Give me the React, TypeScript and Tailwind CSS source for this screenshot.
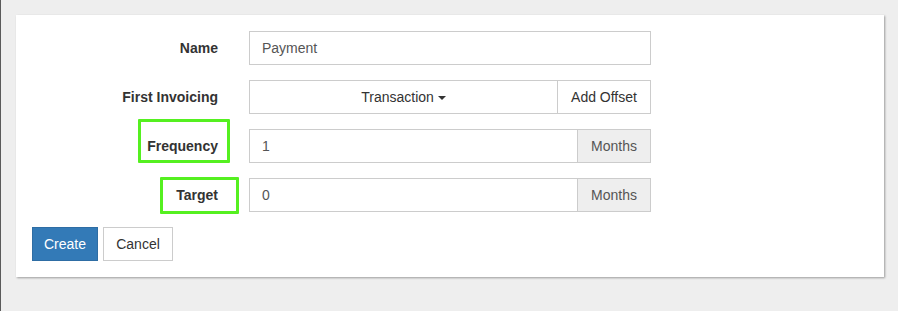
import React from "react";

const font = { fontFamily: '"Liberation Sans", Arial, sans-serif' };

function Label({ children }: { children: React.ReactNode }) {
  return (
    <div className="w-[186px] shrink-0 text-right text-[14px] font-bold text-[#333] leading-[34px]">
      {children}
    </div>
  );
}

function Highlight({ className }: { className: string }) {
  return <div className={`absolute border-[3px] border-[#55f020] rounded-[1px] pointer-events-none ${className}`} />;
}

export default function App() {
  return (
    <div
      className="min-h-[311px] w-full bg-[#eeeeee] border-l border-[#5a5a5a] pt-[15px] pl-[15px] pr-[14px] pb-[34px]"
      style={font}
    >
      <div className="bg-white shadow-[1px_1px_2px_rgba(0,0,0,0.35)] px-4 py-4 text-[14px] text-[#333]">
        <div className="flex flex-col gap-[15px]">
          {/* Name */}
          <div className="flex items-center gap-[31px]">
            <Label>Name</Label>
            <input
              defaultValue="Payment"
              className="w-[402px] h-[34px] border border-[#ccc] px-3 text-[14px] text-[#555] outline-none"
            />
          </div>

          {/* First Invoicing */}
          <div className="flex items-center gap-[31px]">
            <Label>First Invoicing</Label>
            <div className="flex w-[402px] h-[34px]">
              <button className="flex-1 border border-[#ccc] bg-white text-[#333] flex items-center justify-center gap-1">
                Transaction
                <span className="inline-block w-0 h-0 border-l-[4px] border-r-[4px] border-t-[4px] border-l-transparent border-r-transparent border-t-[#333] mt-[2px]" />
              </button>
              <button className="w-[93px] border border-l-0 border-[#ccc] bg-white text-[#333]">Add Offset</button>
            </div>
          </div>

          {/* Frequency */}
          <div className="relative flex items-center gap-[31px]">
            <Highlight className="left-[106px] top-[-10px] w-[92px] h-[44px]" />
            <Label>Frequency</Label>
            <div className="flex w-[402px] h-[34px]">
              <input
                defaultValue="1"
                className="flex-1 min-w-0 border border-[#ccc] px-3 text-[14px] text-[#555] outline-none"
              />
              <div className="w-[73px] border border-l-0 border-[#ccc] bg-[#eee] text-[#555] flex items-center justify-center">
                Months
              </div>
            </div>
          </div>

          {/* Target */}
          <div className="relative flex items-center gap-[31px]">
            <Highlight className="left-[128px] top-[-1px] w-[79px] h-[37px]" />
            <Label>Target</Label>
            <div className="flex w-[402px] h-[34px]">
              <input
                defaultValue="0"
                className="flex-1 min-w-0 border border-[#ccc] px-3 text-[14px] text-[#555] outline-none"
              />
              <div className="w-[73px] border border-l-0 border-[#ccc] bg-[#eee] text-[#555] flex items-center justify-center">
                Months
              </div>
            </div>
          </div>

          {/* Actions */}
          <div className="flex gap-[5px]">
            <button className="h-[34px] w-[66px] bg-[#337ab7] border border-[#2e6da4] text-white">Create</button>
            <button className="h-[34px] w-[70px] bg-white border border-[#ccc] text-[#333]">Cancel</button>
          </div>
        </div>
      </div>
    </div>
  );
}
